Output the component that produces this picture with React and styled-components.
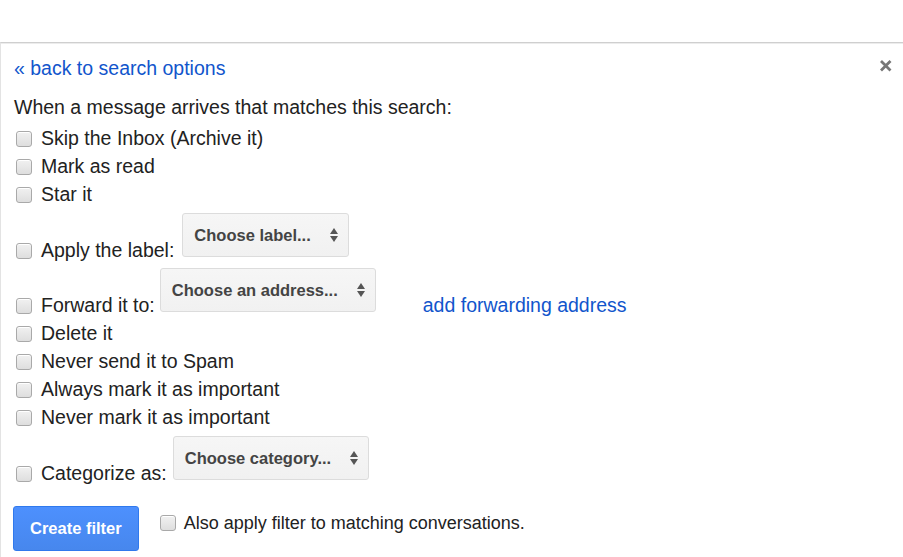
import styled, { createGlobalStyle } from "styled-components";

const GlobalStyle = createGlobalStyle`
  html, body {
    margin: 0;
    padding: 0;
    background: #fff;
  }
  body {
    font-family: "Liberation Sans", Arial, Helvetica, sans-serif;
    color: #222;
  }
`;

const Page = styled.div`
  width: 903px;
  height: 557px;
  overflow: hidden;
  padding-top: 42px;
  box-sizing: border-box;
`;

const Panel = styled.div`
  position: relative;
  border-top: 1px solid #cfcfcf;
  box-shadow: inset 0 1px 0 #ececec;
  border-left: 1px solid #e3e3e3;
  padding: 11px 0 0 13px;
  font-size: 19.5px;
  line-height: 28px;
  height: 100%;
  box-sizing: border-box;
`;

const Close = styled.button`
  position: absolute;
  top: 16px;
  right: 11px;
  width: 13px;
  height: 13px;
  padding: 0;
  border: 0;
  background: none;
  cursor: pointer;
  svg {
    display: block;
  }
`;

const Link = styled.a`
  color: #15c;
  text-decoration: none;
  cursor: pointer;
  margin-left: ${({ $gap }) => $gap || 0}px;
`;

const Heading = styled.div`
  margin-top: 11px;
`;

const Options = styled.div`
  margin-top: 3px;
`;

const Row = styled.div`
  margin-top: ${({ $top }) => $top || 0}px;
  white-space: nowrap;
`;

const Box = styled.span`
  display: inline-block;
  width: 14px;
  height: 14px;
  margin: 0 ${({ $space }) => $space || 9}px 0 2px;
  vertical-align: -2px;
  border: 1px solid #a9a9a9;
  border-radius: 3px;
  background: linear-gradient(#f1f1f1, #dedede);
  box-shadow: inset 0 1px 0 #fff;
`;

const Select = styled.span`
  display: inline-block;
  overflow: hidden;
  height: 42px;
  line-height: 42px;
  margin-left: ${({ $gap }) => $gap || 6}px;
  padding: 0 10px 0 11px;
  border: 1px solid #dcdcdc;
  border-radius: 3px;
  background: linear-gradient(#f6f6f6, #f1f1f1);
  color: #444;
  font-size: 16.5px;
  font-weight: bold;
  cursor: default;
  svg {
    display: inline-block;
    margin-left: 19px;
    vertical-align: -2px;
  }
`;

const Footer = styled.div`
  display: flex;
  align-items: flex-start;
  margin-top: 19px;
  margin-left: -1px;
`;

const Button = styled.button`
  height: 45px;
  padding: 0 16px;
  border: 1px solid #3079ed;
  border-radius: 3px;
  background: linear-gradient(#4d90fe, #4787ed);
  color: #fff;
  font-family: inherit;
  font-size: 16.5px;
  font-weight: bold;
  cursor: pointer;
`;

const Also = styled.div`
  margin: 3px 0 0 19px;
  font-size: 18px;
  white-space: nowrap;
`;

const Arrows = () => (
  <svg width="8" height="16" viewBox="0 0 8 16">
    <path d="M4 1 L8 7 L0 7 Z" fill="#555" />
    <path d="M0 9 L8 9 L4 15 Z" fill="#555" />
  </svg>
);

const Dropdown = ({ children, gap }) => (
  <Select $gap={gap}>
    {children}
    <Arrows />
  </Select>
);

const Option = ({ children, top }) => (
  <Row $top={top}>
    <Box />
    {children}
  </Row>
);

export default function App() {
  return (
    <Page>
      <GlobalStyle />
      <Panel>
        <Close aria-label="Close">
          <svg width="13" height="13" viewBox="0 0 13 13">
            <path
              d="M2 2 L11.5 11.5 M11.5 2 L2 11.5"
              stroke="#777"
              strokeWidth="2.8"
              strokeLinecap="butt"
            />
          </svg>
        </Close>
        <Link>« back to search options</Link>
        <Heading>When a message arrives that matches this search:</Heading>
        <Options>
          <Option>Skip the Inbox (Archive it)</Option>
          <Option>Mark as read</Option>
          <Option>Star it</Option>
          <Option top={5}>
            Apply the label:
            <Dropdown gap={8}>Choose label...</Dropdown>
          </Option>
          <Option top={4}>
            Forward it to:
            <Dropdown gap={5}>Choose an address...</Dropdown>
            <Link $gap={47}>add forwarding address</Link>
          </Option>
          <Option>Delete it</Option>
          <Option>Never send it to Spam</Option>
          <Option>Always mark it as important</Option>
          <Option>Never mark it as important</Option>
          <Option top={5}>
            Categorize as:
            <Dropdown>Choose category...</Dropdown>
          </Option>
        </Options>
        <Footer>
          <Button>Create filter</Button>
          <Also>
            <Box $space={8} />
            Also apply filter to matching conversations.
          </Also>
        </Footer>
      </Panel>
    </Page>
  );
}
